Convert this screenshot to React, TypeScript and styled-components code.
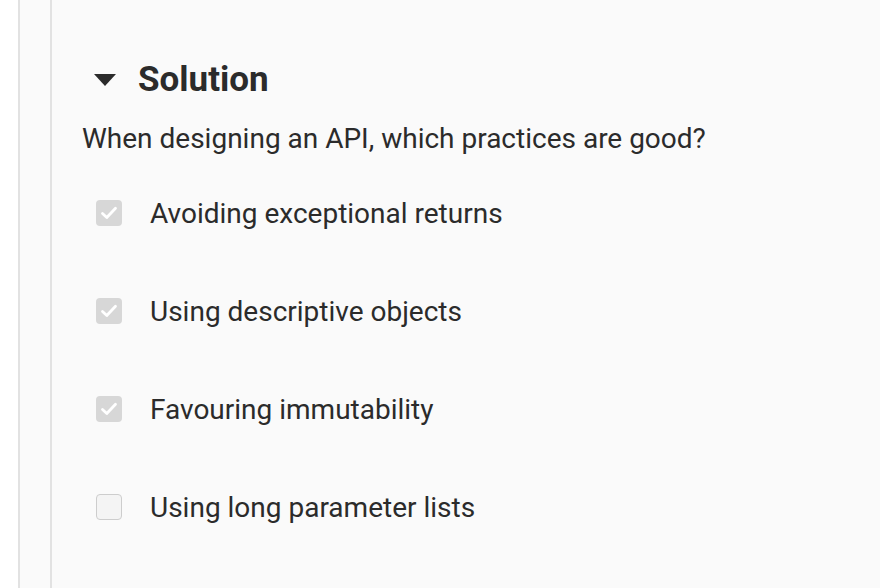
import React from "react";
import styled, { createGlobalStyle } from "styled-components";

const Global = createGlobalStyle`
  html, body { margin: 0; padding: 0; background: #ffffff; }
  body { font-family: Roboto, "Noto Sans", Arial, sans-serif; color: #2b2b2b; }
`;

const Page = styled.div`
  display: flex;
  height: 588px;
  width: 880px;
  overflow: hidden;
  background: #ffffff;
  padding-left: 18px;
  box-sizing: border-box;
`;

const Rail = styled.div`
  width: 30px;
  border-left: 2px solid #e2e2e2;
  border-right: 2px solid #e2e2e2;
  background: #fafafa;
  flex-shrink: 0;
`;

const Content = styled.main`
  flex: 1;
  background: #fafafa;
  padding: 58px 0 0 30px;
`;

const Heading = styled.h2`
  display: flex;
  align-items: center;
  gap: 22px;
  margin: 0 0 0 12px;
  font-size: 35px;
  font-weight: 700;
  line-height: 44px;
  color: #2b2b2b;
`;

const Caret = styled.svg`
  width: 22px;
  height: 13px;
  flex-shrink: 0;
`;

const Question = styled.p`
  margin: 19px 0 0 0;
  font-size: 28px;
  line-height: 36px;
  color: #2b2b2b;
`;

const List = styled.ul`
  list-style: none;
  margin: 38px 0 0 0;
  padding: 0 0 0 14px;
  display: flex;
  flex-direction: column;
  gap: 62px;
`;

const Item = styled.li`
  display: flex;
  align-items: center;
  gap: 28px;
  height: 36px;
  font-size: 28px;
  color: #2b2b2b;
`;

const Box = styled.span<{ $checked: boolean }>`
  width: 26px;
  height: 26px;
  box-sizing: border-box;
  border-radius: 4px;
  display: flex;
  align-items: center;
  justify-content: center;
  background: ${(p) => (p.$checked ? "#d7d7d7" : "#f4f4f4")};
  border: ${(p) => (p.$checked ? "none" : "1.5px solid #cdcdcd")};
  flex-shrink: 0;
`;

const items = [
  { label: "Avoiding exceptional returns", checked: true },
  { label: "Using descriptive objects", checked: true },
  { label: "Favouring immutability", checked: true },
  { label: "Using long parameter lists", checked: false },
];

export default function App() {
  return (
    <>
      <Global />
      <Page>
        <Rail />
        <Content>
          <Heading>
            <Caret viewBox="0 0 22 13">
              <path d="M0 0 H22 L11 12 Z" fill="#2b2b2b" />
            </Caret>
            Solution
          </Heading>
          <Question>When designing an API, which practices are good?</Question>
          <List>
            {items.map((it) => (
              <Item key={it.label}>
                <Box $checked={it.checked}>
                  {it.checked && (
                    <svg width="26" height="26" viewBox="0 0 26 26">
                      <path
                        d="M6.5 13.5 L10.8 17.5 L19.5 8.2"
                        fill="none"
                        stroke="#ffffff"
                        strokeWidth="2.8"
                        strokeLinecap="round"
                        strokeLinejoin="round"
                      />
                    </svg>
                  )}
                </Box>
                {it.label}
              </Item>
            ))}
          </List>
        </Content>
      </Page>
    </>
  );
}
